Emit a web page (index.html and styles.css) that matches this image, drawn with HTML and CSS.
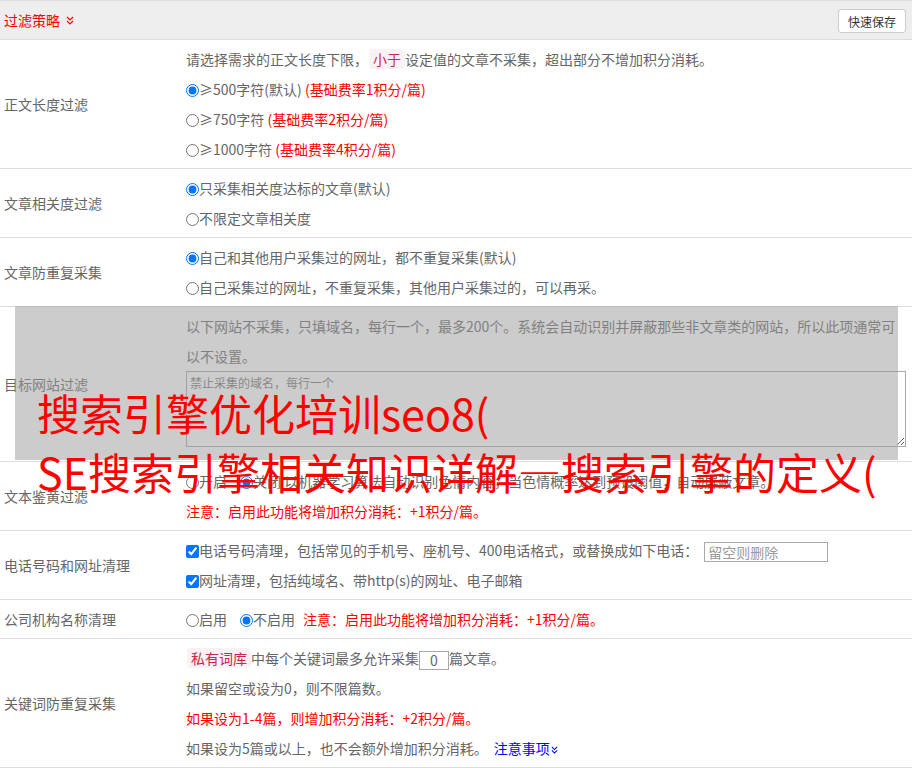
FILE: index.html
```html
<!DOCTYPE html>
<html lang="zh-CN">
<head>
  <meta charset="UTF-8" />
  <meta name="viewport" content="width=device-width, initial-scale=1.0"/>
  <title>过滤策略</title>
  <link rel="stylesheet" href="styles.css">
</head>
<body>
  <div class="page">

    <!-- panel header -->
    <div class="panel-head">
      <span class="panel-title">过滤策略
        <svg class="chev" width="8" height="9" viewBox="0 0 8 9"><path d="M1 1l3 3 3-3M1 5l3 3 3-3" fill="none" stroke="currentColor" stroke-width="1.2"/></svg>
      </span>
      <button class="btn-save">快速保存</button>
    </div>

    <div class="row">
      <div class="row-label">正文长度过滤</div>
      <div class="row-body">
        <p>请选择需求的正文长度下限，<span class="tag">小于</span>设定值的文章不采集，超出部分不增加积分消耗。</p>
        <p><label><input type="radio" name="len" checked>≥500字符(默认)</label> <span class="warn">(基础费率1积分/篇)</span></p>
        <p><label><input type="radio" name="len">≥750字符</label> <span class="warn">(基础费率2积分/篇)</span></p>
        <p><label><input type="radio" name="len">≥1000字符</label> <span class="warn">(基础费率4积分/篇)</span></p>
      </div>
    </div>

    <div class="row">
      <div class="row-label">文章相关度过滤</div>
      <div class="row-body">
        <p><label><input type="radio" name="rel" checked>只采集相关度达标的文章(默认)</label></p>
        <p><label><input type="radio" name="rel">不限定文章相关度</label></p>
      </div>
    </div>

    <div class="row">
      <div class="row-label">文章防重复采集</div>
      <div class="row-body">
        <p><label><input type="radio" name="dup" checked>自己和其他用户采集过的网址，都不重复采集(默认)</label></p>
        <p><label><input type="radio" name="dup">自己采集过的网址，不重复采集，其他用户采集过的，可以再采。</label></p>
      </div>
    </div>

    <div class="row row-masked">
      <div class="row-label">目标网站过滤</div>
      <div class="row-body">
        <p>以下网站不采集，只填域名，每行一个，最多200个。系统会自动识别并屏蔽那些非文章类的网站，所以此项通常可以不设置。</p>
        <textarea class="domains" placeholder="禁止采集的域名，每行一个"></textarea>
      </div>
      <div class="mask"></div>
    </div>

    <div class="row">
      <div class="row-label">文本鉴黄过滤</div>
      <div class="row-body">
        <p><label class="opt"><input type="radio" name="porn">开启</label><label class="opt"><input type="radio" name="porn" checked>关闭</label> 以机器学习算法自动识别色情内容，当色情概率达到预设阈值，自动屏蔽文章。</p>
        <p class="warn">注意：启用此功能将增加积分消耗：+1积分/篇。</p>
      </div>
    </div>

    <div class="row">
      <div class="row-label">电话号码和网址清理</div>
      <div class="row-body">
        <p><label><input type="checkbox" checked>电话号码清理，包括常见的手机号、座机号、400电话格式，或替换成如下电话：</label><input class="phone" type="text" placeholder="留空则删除"></p>
        <p><label><input type="checkbox" checked>网址清理，包括纯域名、带http(s)的网址、电子邮箱</label></p>
      </div>
    </div>

    <div class="row">
      <div class="row-label">公司机构名称清理</div>
      <div class="row-body">
        <p><label class="opt"><input type="radio" name="org">启用</label><label class="opt"><input type="radio" name="org" checked>不启用</label><span class="warn note">注意：启用此功能将增加积分消耗：+1积分/篇。</span></p>
      </div>
    </div>

    <div class="row">
      <div class="row-label">关键词防重复采集</div>
      <div class="row-body">
        <p><span class="tag">私有词库</span>中每个关键词最多允许采集<input class="num" type="text" value="0">篇文章。</p>
        <p>如果留空或设为0，则不限篇数。</p>
        <p class="warn">如果设为1-4篇，则增加积分消耗：+2积分/篇。</p>
        <p>如果设为5篇或以上，也不会额外增加积分消耗。<a class="more" href="#">注意事项<svg class="chev" width="7" height="8" viewBox="0 0 8 9"><path d="M1 1l3 3 3-3M1 5l3 3 3-3" fill="none" stroke="currentColor" stroke-width="1.2"/></svg></a></p>
      </div>
    </div>

    <div class="ad-title">搜索引擎优化培训seo8(<br>SE搜索引擎相关知识详解—搜索引擎的定义(</div>
  </div>
</body>
</html>
```

FILE: styles.css
```css
* { box-sizing: border-box; }

body {
  margin: 0;
  font-family: "Microsoft YaHei", "Noto Sans CJK SC", sans-serif;
  font-size: 14px;
  color: #666;
  background: #fff;
}

.page {
  position: relative;
}

.panel-head {
  display: flex;
  align-items: center;
  justify-content: space-between;
  height: 40px;
  padding: 0 6px 0 4px;
  background: #eee;
  border-top: 1px solid #ddd;
  border-bottom: 1px solid #ddd;
}

.panel-title {
  color: #f00;
  display: flex;
  align-items: center;
  gap: 6px;
}

.btn-save {
  font: inherit;
  font-size: 12px;
  color: #333;
  background: #fff;
  border: 1px solid #ccc;
  border-radius: 3px;
  height: 24px;
  padding: 0 9px;
  margin-top: 2px;
}

.row {
  display: grid;
  grid-template-columns: 186px 1fr;
  border-bottom: 1px solid #ddd;
}

.row-label {
  align-self: center;
  padding-left: 4px;
}

.row-body {
  padding: 4px 6px 4px 0;
  line-height: 30px;
}

.row-body p {
  margin: 0;
}

.row-body input[type=radio],
.row-body input[type=checkbox] {
  margin: 0;
  vertical-align: -2px;
}

.opt + .opt {
  margin-left: 13px;
}

.note {
  margin-left: 8px;
}

.tag {
  display: inline-block;
  margin-left: 1px;
  padding: 0 4px;
  line-height: 20px;
  border-radius: 4px;
  background: #f9f2f4;
  color: #c7254e;
}

.warn {
  color: #f00;
}

.row-masked {
  position: relative;
}

.domains {
  display: block;
  width: 100%;
  height: 76px;
  margin-bottom: 10px;
  padding: 2px 3px;
  border: 1px solid #a9a9a9;
  font-family: inherit;
  font-size: 12px;
  line-height: 18px;
}

.mask {
  position: absolute;
  left: 15px;
  right: 14px;
  top: -1px;
  bottom: 1px;
  background: rgba(153, 153, 153, 0.5);
}

.phone {
  width: 124px;
  height: 20px;
  margin-left: 6px;
  padding: 0 3px;
  border: 1px solid #a9a9a9;
  font: inherit;
  vertical-align: middle;
}

.phone::placeholder {
  color: #999;
}

.num {
  width: 30px;
  height: 19px;
  padding: 0;
  border: 1px solid #a9a9a9;
  font: inherit;
  color: #666;
  text-align: center;
  vertical-align: middle;
}

.more {
  color: #00f;
  text-decoration: none;
  margin-left: 6px;
}

.more .chev {
  margin-left: 1px;
  vertical-align: 0;
}

.ad-title {
  position: absolute;
  left: 37px;
  top: 383px;
  font-size: 43px;
  line-height: 59px;
  color: #f00;
  white-space: nowrap;
  pointer-events: none;
}
```
